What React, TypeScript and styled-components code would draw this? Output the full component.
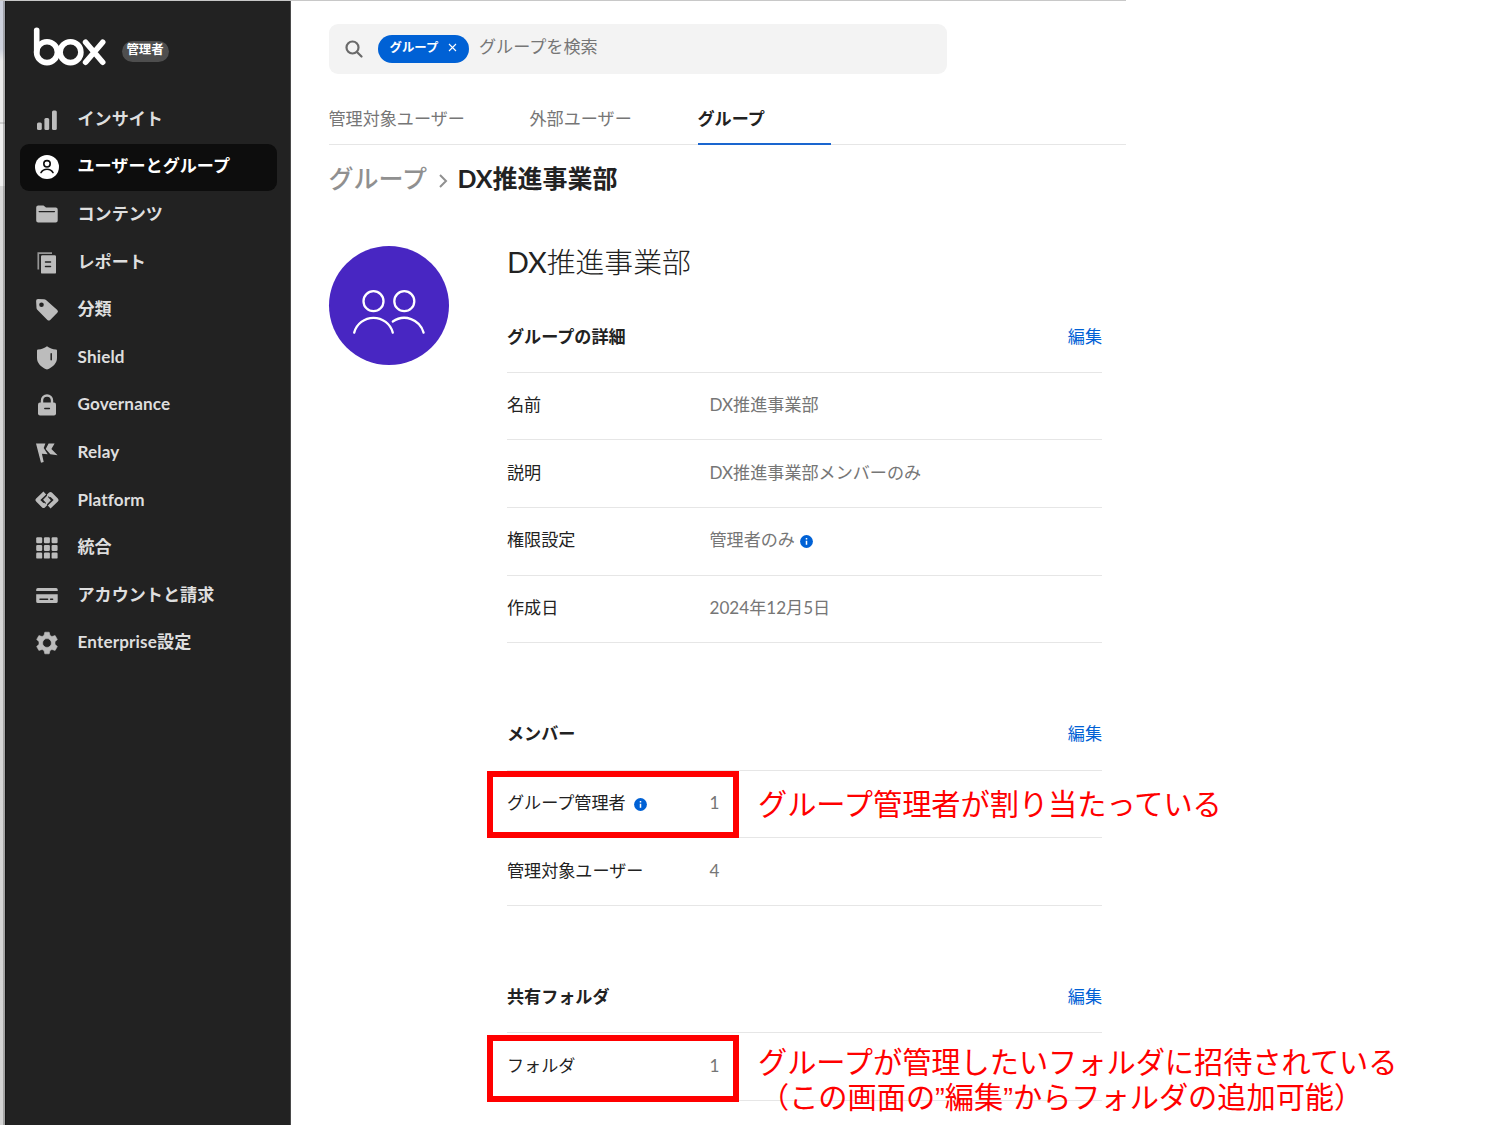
import React from "react";
import styled, { createGlobalStyle, css } from "styled-components";

const GlobalStyle = createGlobalStyle`
  *, *::before, *::after { box-sizing: border-box; }
  body { margin: 0; background: #fff; }
  svg { display: block; flex: none; }
`;

const Page = styled.div`
  position: relative;
  width: 1485px;
  height: 1133px;
  overflow: hidden;
  background: #fff;
  color: #222;
  font-family: Lato, "Noto Sans CJK JP", sans-serif;
  font-size: 17.1px;
  line-height: 24px;
`;

const Frame = styled.div`
  display: flex;
  width: 1126px;
  height: 1125px;
  border-top: 1px solid #c8c8c8;
`;

const WindowEdge = styled.div`
  flex: none;
  width: 5px;
  background: linear-gradient(90deg, transparent 3px, rgba(90, 90, 90, 0.4) 3px),
    linear-gradient(#cdd1dd 0, #cfd3de 48px, #ececec 60px, #ececec 121px, #cfcfcf 121px, #cfcfcf 123px, #f0f0f0 123px, #f0f0f0 185px, #d9d9d9 185px, #d4d4d4 100%);
`;

const Sidebar = styled.aside`
  flex: none;
  width: 286px;
  background: #222;
  border-left: 1px solid #161616;
  border-right: 1px solid #4a4a4a;
`;

const Brand = styled.div`
  display: flex;
  align-items: center;
  height: 95px;
  padding: 0 0 4px 27px;
`;

const RoleBadge = styled.span`
  margin: 9px 0 0 14.5px;
  width: 47px;
  height: 21px;
  border-radius: 11px;
  background: #4e4e4e;
  color: #fff;
  font-size: 12.4px;
  font-weight: 700;
  line-height: 18px;
  text-align: center;
`;

const Nav = styled.nav`
  display: flex;
  flex-direction: column;
  padding: 0 13px 0 14px;
`;

const NavItem = styled.a<{ $active?: boolean }>`
  display: flex;
  align-items: center;
  gap: 18.5px;
  height: 47.6px;
  padding-left: 15px;
  border-radius: 9px;
  font-weight: 700;
  color: ${(p) => (p.$active ? "#fff" : "#dedede")};
  background: ${(p) => (p.$active ? "#0d0d0d" : "transparent")};
  svg { color: ${(p) => (p.$active ? "#fff" : "#bcbcbc")}; }
`;

const NavLabel = styled.span<{ $latin: boolean }>`
  padding-bottom: 2px;
  letter-spacing: ${(p) => (p.$latin ? "0.15px" : "normal")};
`;

const Main = styled.main`
  flex: 1;
  display: flex;
  flex-direction: column;
  padding: 23px 0 0 37.5px;
  > * { flex-shrink: 0; }
`;

const SearchBar = styled.div`
  display: flex;
  align-items: center;
  width: 618px;
  height: 50px;
  padding-left: 16px;
  border-radius: 9px;
  background: #f3f3f3;
`;

const Chip = styled.span`
  display: flex;
  align-items: center;
  gap: 10px;
  width: 91px;
  height: 28px;
  margin: 0 10px 0 15.5px;
  padding: 0 0 3px 11.5px;
  border-radius: 14px;
  background: #0061d5;
  color: #fff;
  font-size: 12.4px;
  font-weight: 700;
`;

const Placeholder = styled.span`
  padding-bottom: 4px;
  color: #767676;
`;

const Tabs = styled.div`
  display: flex;
  align-items: flex-end;
  height: 71px;
  border-bottom: 1px solid #e6e6e6;
`;

const Tab = styled.div<{ $width: number; $active?: boolean }>`
  width: ${(p) => p.$width}px;
  height: 38px;
  color: #767676;
  margin-bottom: -1px;
  ${(p) =>
    p.$active &&
    css`
      color: #222;
      font-weight: 700;
      border-bottom: 2px solid #1a66cf;
    `}
`;

const Breadcrumb = styled.div`
  display: flex;
  align-items: center;
  height: 66px;
  font-size: 25px;
  font-weight: 500;
  line-height: 36px;
  color: #909090;
  svg { margin: 6px 10px 0 10.5px; }
`;

const Current = styled.span`
  color: #222;
  font-weight: 700;
`;

const Detail = styled.div`
  display: flex;
  gap: 58.5px;
  padding-top: 35px;
`;

const Avatar = styled.div`
  flex: none;
  width: 120px;
  height: 119px;
  border-radius: 50%;
  background: #4826c2;
`;

const Info = styled.div`
  width: 595px;
`;

const Title = styled.h1`
  margin: 0;
  height: 55.5px;
  font-family: Lato, "Noto Sans CJK JP Light", "Noto Sans CJK JP", sans-serif;
  font-size: 28.8px;
  font-weight: 400;
  line-height: 32px;
`;

const Section = styled.section`
  margin-bottom: 56px;
`;

const SectionHead = styled.header`
  display: flex;
  justify-content: space-between;
  align-items: center;
  height: 71.4px;
  border-bottom: 1px solid #e6e6e6;
  font-weight: 700;
`;

const EditLink = styled.a`
  color: #0061d5;
  font-weight: 400;
`;

const Row = styled.div`
  display: grid;
  grid-template-columns: 202.5px 1fr;
  align-items: center;
  height: 67.6px;
  padding-bottom: 2px;
  border-bottom: 1px solid #e6e6e6;
`;

const Cell = styled.div<{ $muted?: boolean }>`
  display: flex;
  align-items: center;
  gap: ${(p) => (p.$muted ? 5.5 : 8.5)}px;
  color: ${(p) => (p.$muted ? "#767676" : "#222")};
  svg { margin-top: 3px; }
`;

const Highlight = styled.div<{ $top: number }>`
  position: absolute;
  left: 487px;
  top: ${(p) => p.$top}px;
  width: 252px;
  height: 67px;
  border: 6px solid #f00;
`;

const Note = styled.p<{ $top: number }>`
  position: absolute;
  left: 758px;
  top: ${(p) => p.$top}px;
  margin: 0;
  color: #f00;
  font-family: "Liberation Sans", "Noto Sans CJK JP", sans-serif;
  font-size: 29.2px;
  line-height: 35px;
  white-space: nowrap;
`;

const NoteLine = styled.span<{ $indent?: number }>`
  display: block;
  padding-left: ${(p) => p.$indent ?? 0}px;
`;

const Icon = ({ children }: { children: React.ReactNode }) => (
  <svg width="24" height="24" viewBox="0 0 24 24" fill="currentColor">
    {children}
  </svg>
);

const dark = "#222";

const icons = {
  insights: (
    <Icon>
      <rect x="2" y="14.5" width="4.8" height="7.5" rx="1.5" />
      <rect x="9.4" y="10" width="4.8" height="12" rx="1.5" />
      <rect x="17" y="2.6" width="4.8" height="19.4" rx="1.5" />
    </Icon>
  ),
  users: (
    <Icon>
      <circle cx="12" cy="12" r="12" />
      <g fill="none" stroke="#0d0d0d" strokeWidth="1.6" strokeLinecap="round">
        <circle cx="12" cy="8.8" r="3.2" />
        <path d="M6 17.6c2.6-4.5 9.4-4.5 12 0" />
      </g>
    </Icon>
  ),
  folder: (
    <Icon>
      <path d="M1.2 4.500a2 2 0 0 1 2-2h5.300l2.500 2h9.700a2 2 0 0 1 2 2v11a2 2 0 0 1-2 2H3.200a2 2 0 0 1-2-2z" />
      <path d="M4.2 8.600h15.200" stroke={dark} strokeWidth="1.400" strokeLinecap="round" />
    </Icon>
  ),
  report: (
    <Icon>
      <path d="M3.300 18.500V2.200H17" fill="none" stroke="currentColor" strokeWidth="1.700" opacity=".75" />
      <path d="M6 5.600A1.400 1.400 0 0 1 7.400 4.200h12.200A1.400 1.400 0 0 1 21 5.600v16.200a.6.600 0 0 1-.6.600H6.600a.6.600 0 0 1-.6-.600z" />
      <path d="M10.500 11h5M10.500 15.600h5" stroke={dark} strokeWidth="1.500" strokeLinecap="round" />
    </Icon>
  ),
  tag: (
    <Icon>
      <path
        fillRule="evenodd"
        d="M3 .9l6 .300a3 3 0 0 1 2 .9L22.300 12a2 2 0 0 1 0 2.800L15.200 21.900a2 2 0 0 1-2.800 0L2.300 11.700a3 3 0 0 1-.8-1.700L1.100 3A2 2 0 0 1 3 .9zM6.500 4.400a2.300 2.300 0 1 0 0 4.600a2.300 2.300 0 1 0 0-4.600z"
      />
    </Icon>
  ),
  shield: (
    <Icon>
      <path d="M12 .2c2.500 1.800 5.500 3 9 3.300.6.100 1 .5 1 1V12c0 5.200-4.200 9.300-10 11.600C6.200 21.300 2 17.200 2 12V4.500c0-.5.4-.9 1-1C6.500 3.200 9.500 2 12 .2z" />
      <path d="M16.200 7.800v6" stroke={dark} strokeWidth="1.500" strokeLinecap="round" />
    </Icon>
  ),
  lock: (
    <Icon>
      <path d="M7 11V7.500a5 5 0 0 1 10 0V11" fill="none" stroke="currentColor" strokeWidth="2.400" />
      <rect x="3" y="9.500" width="18" height="13" rx="2" />
      <path d="M9.800 15.600h4.600" stroke={dark} strokeWidth="1.500" strokeLinecap="round" />
    </Icon>
  ),
  relay: (
    <Icon>
      <path d="M1 2.500h9.400L8.700 6.900l4 6.400-5.800-.6 1.800 8.300-2.700.7z" />
      <path d="M13.600 2.500h6L16.400 8.100l6.200 6.200-7.300-1L10.700 8z" />
    </Icon>
  ),
  platform: (
    <Icon>
      <g transform="translate(0 -1)">
        <g fill="none" stroke="currentColor" strokeWidth="3.900" strokeLinejoin="round">
          <path d="M9.800 5L2.500 12l6 6 5.500-5.500-2.300-2.500" />
          <path d="M14.200 19L21.500 12l-6-6-5.500 5.500 2.300 2.500" />
        </g>
        <path d="M11.800 7.200L7.300 11.900l3.400 3.400M12.200 16.800l4.500-4.700-3.400-3.400" fill="none" stroke={dark} strokeWidth="1.100" />
      </g>
    </Icon>
  ),
  grid: (
    <Icon>
      {[1.2, 8.9, 16.6].map((y) =>
        [1.2, 8.9, 16.6].map((x) => (
          <rect key={`${x}-${y}`} x={x} y={y} width="6" height="6" rx="1.200" />
        ))
      )}
    </Icon>
  ),
  card: (
    <Icon>
      <path d="M1.200 5.600a1.600 1.600 0 0 1 1.600-1.600h18.300a1.600 1.600 0 0 1 1.600 1.600v1.400H1.200zM1.200 10.200h21.500v7.300a1.600 1.600 0 0 1-1.600 1.600H2.800a1.600 1.600 0 0 1-1.600-1.600z" />
      <path d="M5 15.200h7.600M15.600 15.200h2" stroke={dark} strokeWidth="1.500" strokeLinecap="round" />
    </Icon>
  ),
  gear: (
    <Icon>
      <path
        fillRule="evenodd"
        d="M9.800 1.200h4.400l.8 3.200 1.900 1.100 3.200-.9 2.200 3.800-2.300 2.400v2.400l2.300 2.400-2.200 3.800-3.200-.9-1.900 1.100-.8 3.200H9.800L9 19.600l-1.900-1.100-3.200.9-2.200-3.800L4 13.200v-2.400L1.700 8.400l2.200-3.800 3.200.9L9 4.400zM12 7.600a4.400 4.400 0 1 0 0 8.800a4.400 4.400 0 1 0 0-8.800z"
        stroke="currentColor"
        strokeWidth=".6"
        strokeLinejoin="round"
      />
    </Icon>
  ),
};

const BoxLogo = () => (
  <svg width="74" height="40" viewBox="0 0 74 40" fill="none" stroke="#fff" strokeWidth="5.600" strokeLinecap="round" role="img" aria-label="box">
    <path d="M3.700 3.400V25" />
    <circle cx="14" cy="25.200" r="10.400" />
    <circle cx="37.500" cy="25.200" r="10.400" />
    <path d="M52.600 15.200L69.700 35.200M69.700 15.200L52.600 35.200" />
  </svg>
);

const SearchIcon = () => (
  <svg width="18" height="18" viewBox="0 0 18 18" fill="none" stroke="#6a6a6a" strokeWidth="2.200" strokeLinecap="round">
    <circle cx="7.500" cy="7.500" r="6" />
    <path d="M12.200 12.200l4.300 4.300" />
  </svg>
);

const CloseIcon = () => (
  <svg width="9" height="9" viewBox="0 0 9 9" stroke="#fff" strokeWidth="1.100">
    <path d="M1 1l7 7M8 1L1 8" />
  </svg>
);

const Chevron = () => (
  <svg width="10" height="14" viewBox="0 0 10 14" fill="none" stroke="#909090" strokeWidth="2">
    <path d="M2 1l6 6-6 6" />
  </svg>
);

const InfoIcon = () => (
  <svg width="13" height="13" viewBox="0 0 13 13">
    <circle cx="6.500" cy="6.500" r="6.400" fill="#0061d5" />
    <path d="M6.500 5.800v4M6.500 3v1.500" stroke="#fff" strokeWidth="1.500" />
  </svg>
);

const GroupIcon = () => (
  <svg width="120" height="119" viewBox="0 0 120 119" fill="none" stroke="#fff" strokeWidth="2.300" strokeLinecap="round">
    <circle cx="44.500" cy="55.200" r="10" />
    <circle cx="75.300" cy="55.200" r="10" />
    <path d="M25.200 86.600a20 20 0 0 1 38.600 0" />
    <path d="M63.800 75.500a20 20 0 0 1 30.800 11.100" />
  </svg>
);

const navItems: { label: string; icon: keyof typeof icons; active?: boolean }[] = [
  { label: "インサイト", icon: "insights" },
  { label: "ユーザーとグループ", icon: "users", active: true },
  { label: "コンテンツ", icon: "folder" },
  { label: "レポート", icon: "report" },
  { label: "分類", icon: "tag" },
  { label: "Shield", icon: "shield" },
  { label: "Governance", icon: "lock" },
  { label: "Relay", icon: "relay" },
  { label: "Platform", icon: "platform" },
  { label: "統合", icon: "grid" },
  { label: "アカウントと請求", icon: "card" },
  { label: "Enterprise設定", icon: "gear" },
];

type RowData = { label: string; value: string; labelInfo?: boolean; valueInfo?: boolean };

const sections: { title: string; rows: RowData[] }[] = [
  {
    title: "グループの詳細",
    rows: [
      { label: "名前", value: "DX推進事業部" },
      { label: "説明", value: "DX推進事業部メンバーのみ" },
      { label: "権限設定", value: "管理者のみ", valueInfo: true },
      { label: "作成日", value: "2024年12月5日" },
    ],
  },
  {
    title: "メンバー",
    rows: [
      { label: "グループ管理者", value: "1", labelInfo: true },
      { label: "管理対象ユーザー", value: "4" },
    ],
  },
  { title: "共有フォルダ", rows: [{ label: "フォルダ", value: "1" }] },
];

export default function App() {
  return (
    <Page lang="ja">
      <GlobalStyle />
      <Frame>
        <WindowEdge />
        <Sidebar>
          <Brand>
            <BoxLogo />
            <RoleBadge>管理者</RoleBadge>
          </Brand>
          <Nav>
            {navItems.map((item) => (
              <NavItem key={item.label} $active={item.active}>
                {icons[item.icon]}
                <NavLabel $latin={/[A-Za-z]/.test(item.label)}>{item.label}</NavLabel>
              </NavItem>
            ))}
          </Nav>
        </Sidebar>
        <Main>
          <SearchBar>
            <SearchIcon />
            <Chip>
              グループ
              <CloseIcon />
            </Chip>
            <Placeholder>グループを検索</Placeholder>
          </SearchBar>
          <Tabs>
            <Tab $width={201}>管理対象ユーザー</Tab>
            <Tab $width={168}>外部ユーザー</Tab>
            <Tab $width={133} $active>
              グループ
            </Tab>
          </Tabs>
          <Breadcrumb>
            <span>グループ</span>
            <Chevron />
            <Current>DX推進事業部</Current>
          </Breadcrumb>
          <Detail>
            <Avatar>
              <GroupIcon />
            </Avatar>
            <Info>
              <Title>DX推進事業部</Title>
              {sections.map((section) => (
                <Section key={section.title}>
                  <SectionHead>
                    <span>{section.title}</span>
                    <EditLink>編集</EditLink>
                  </SectionHead>
                  {section.rows.map((row) => (
                    <Row key={row.label}>
                      <Cell>
                        {row.label}
                        {row.labelInfo && <InfoIcon />}
                      </Cell>
                      <Cell $muted>
                        {row.value}
                        {row.valueInfo && <InfoIcon />}
                      </Cell>
                    </Row>
                  ))}
                </Section>
              ))}
            </Info>
          </Detail>
        </Main>
      </Frame>
      <Highlight $top={771} />
      <Highlight $top={1035} />
      <Note $top={788}>
        <NoteLine>グループ管理者が割り当たっている</NoteLine>
      </Note>
      <Note $top={1046}>
        <NoteLine>グループが管理したいフォルダに招待されている</NoteLine>
        <NoteLine $indent={2}>（この画面の”編集”からフォルダの追加可能）</NoteLine>
      </Note>
    </Page>
  );
}
